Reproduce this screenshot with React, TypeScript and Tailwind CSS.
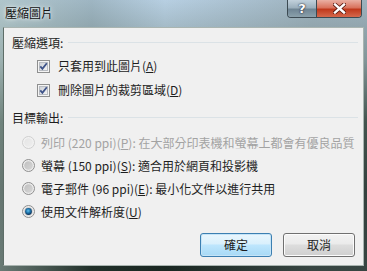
import React from "react";

function CheckBox() {
  return (
    <svg width="13" height="13" viewBox="0 0 13 13" className="shrink-0">
      <defs>
        <linearGradient id="cbFill" x1="0" y1="0" x2="1" y2="1">
          <stop offset="0" stopColor="#cbcfd5" />
          <stop offset="1" stopColor="#f6f6f6" />
        </linearGradient>
      </defs>
      <rect x="0.5" y="0.5" width="12" height="12" fill="#f4f4f4" stroke="#8e8f8f" />
      <rect x="2.5" y="2.5" width="8" height="8" fill="url(#cbFill)" stroke="#b8bcc2" />
      <path d="M3.3 6.4 L5.4 8.8 L9.8 3.2" fill="none" stroke="#3e5389" strokeWidth="1.8" />
    </svg>
  );
}

function Radio({ checked, disabled }: { checked?: boolean; disabled?: boolean }) {
  const id = checked ? "rdOn" : disabled ? "rdOff" : "rdN";
  return (
    <svg width="13" height="13" viewBox="0 0 13 13" className="shrink-0">
      <defs>
        <linearGradient id={id + "b"} x1="0" y1="0" x2="1" y2="1">
          <stop offset="0" stopColor={disabled ? "#d8d8d8" : "#b5b5b5"} />
          <stop offset="1" stopColor={disabled ? "#eaeaea" : "#d0d0d0"} />
        </linearGradient>
        <radialGradient id={id + "d"} cx="0.45" cy="0.4" r="0.6">
          <stop offset="0" stopColor="#5fc1f0" />
          <stop offset="0.55" stopColor="#1b6fa6" />
          <stop offset="1" stopColor="#0c2f55" />
        </radialGradient>
      </defs>
      <circle cx="6.5" cy="6.5" r="6" fill={disabled ? "#f2f2f2" : "#ececec"} stroke={disabled ? "#cfcfcf" : "#8f8f8f"} />
      <circle cx="6.5" cy="6.5" r="4.3" fill={`url(#${id}b)`} opacity={disabled ? 0.5 : 0.8} />
      {checked && <circle cx="6.5" cy="6.5" r="3.4" fill={`url(#${id}d)`} />}
    </svg>
  );
}

function Section({ title }: { title: string }) {
  return (
    <div className="flex items-center h-[20px]">
      <span className="text-[#1e1e1e]">{title}</span>
      <div className="flex-1 ml-[5px] mr-[5px] h-[2px] border-t border-[#dbe2e6] border-b-white" />
    </div>
  );
}

export default function App() {
  return (
    <div
      className="w-[367px] h-[271px] flex flex-col bg-[linear-gradient(90deg,rgba(170,190,185,0.55)_0%,rgba(60,80,70,0.2)_25%,rgba(0,0,0,0)_45%,rgba(110,125,125,0.35)_85%),linear-gradient(180deg,#b7cfe2_0%,#8ea3a8_22%,#2b3d35_45%,#15211c_70%,#1a2722_100%)] relative overflow-hidden"
      style={{ fontFamily: '"Noto Sans CJK TC", "Open Sans", sans-serif' }}
    >
      {/* title bar */}
      <div className="h-[27px] flex items-start pl-[5px] pt-[5px]">
        <span className="text-[12px] leading-[16px] text-[#111] [text-shadow:0_0_6px_#e8eef0,0_0_3px_#e8eef0]">壓縮圖片</span>
      </div>

      {/* caption buttons */}
      <div className="absolute top-0 right-[5px] flex h-[18px] rounded-b-[4px] overflow-hidden border border-t-0 border-[#3c4a52]">
        <div className="w-[29px] flex items-center justify-center bg-[linear-gradient(180deg,#c2d1dc_0%,#9cb0bd_45%,#6f8594_55%,#8ba0ab_100%)] border-r border-[#3c4a52]">
          <span className="text-white text-[13px] font-bold leading-none [text-shadow:0_0_2px_#223,0_0_1px_#223]" style={{ fontFamily: '"DejaVu Sans", sans-serif' }}>?</span>
        </div>
        <div className="w-[44px] flex items-center justify-center bg-[linear-gradient(180deg,#eab0a3_0%,#d9735d_45%,#c0391c_55%,#d5684c_100%)]">
          <svg width="13" height="11" viewBox="0 0 13 11">
            <path d="M2 1.5 L11 9.5 M11 1.5 L2 9.5" stroke="#5a1a10" strokeWidth="4" strokeLinecap="square" />
            <path d="M2 1.5 L11 9.5 M11 1.5 L2 9.5" stroke="#ffffff" strokeWidth="2.4" strokeLinecap="square" />
          </svg>
        </div>
      </div>

      {/* client area */}
      <div className="mx-[3px] w-[361px] h-[239px] bg-[#f0f0f0] border border-[#a9b4b0] border-l-[#5e6e68] text-[12px] text-[#1e1e1e] flex flex-col pl-[8px]">
        <div className="pt-[5px]">
          <Section title="壓縮選項:" />
        </div>
        <div className="mt-[1px] pl-[25px] flex flex-col">
          <div className="h-[24px] flex items-center gap-[8px]">
            <CheckBox />
            <span>只套用到此圖片(<span className="underline">A</span>)</span>
          </div>
          <div className="h-[24px] flex items-center gap-[8px]">
            <CheckBox />
            <span>刪除圖片的裁剪區域(<span className="underline">D</span>)</span>
          </div>
        </div>
        <div className="mt-[6px]">
          <Section title="目標輸出:" />
        </div>
        <div className="mt-[3px] pl-[10px] flex flex-col">
          <div className="h-[23px] flex items-center gap-[6px] text-[#a3a3a3] whitespace-nowrap">
            <Radio disabled />
            <span>列印 (220 ppi)(<span className="underline">P</span>): 在大部分印表機和螢幕上都會有優良品質</span>
          </div>
          <div className="h-[23px] flex items-center gap-[6px]">
            <Radio />
            <span>螢幕 (150 ppi)(<span className="underline">S</span>): 適合用於網頁和投影機</span>
          </div>
          <div className="h-[23px] flex items-center gap-[6px]">
            <Radio />
            <span>電子郵件 (96 ppi)(<span className="underline">E</span>): 最小化文件以進行共用</span>
          </div>
          <div className="h-[23px] flex items-center gap-[6px]">
            <Radio checked />
            <span>使用文件解析度(<span className="underline">U</span>)</span>
          </div>
        </div>
        <div className="mt-[10px] flex justify-end gap-[11px] pr-[8px]">
          <button className="w-[72px] h-[24px] rounded-[3px] border border-[#3c7fb1] bg-[linear-gradient(180deg,#eaf6fd_0%,#d9f0fc_45%,#bee6fd_50%,#a7d9f5_100%)] shadow-[inset_0_0_0_1px_#c5e4f7] text-[12px] text-[#1e1e1e]">
            確定
          </button>
          <button className="w-[72px] h-[24px] rounded-[3px] border border-[#707070] bg-[linear-gradient(180deg,#f2f2f2_0%,#ebebeb_45%,#dddddd_50%,#cfcfcf_100%)] shadow-[inset_0_0_0_1px_#fcfcfc] text-[12px] text-[#1e1e1e]">
            取消
          </button>
        </div>
      </div>
    </div>
  );
}
